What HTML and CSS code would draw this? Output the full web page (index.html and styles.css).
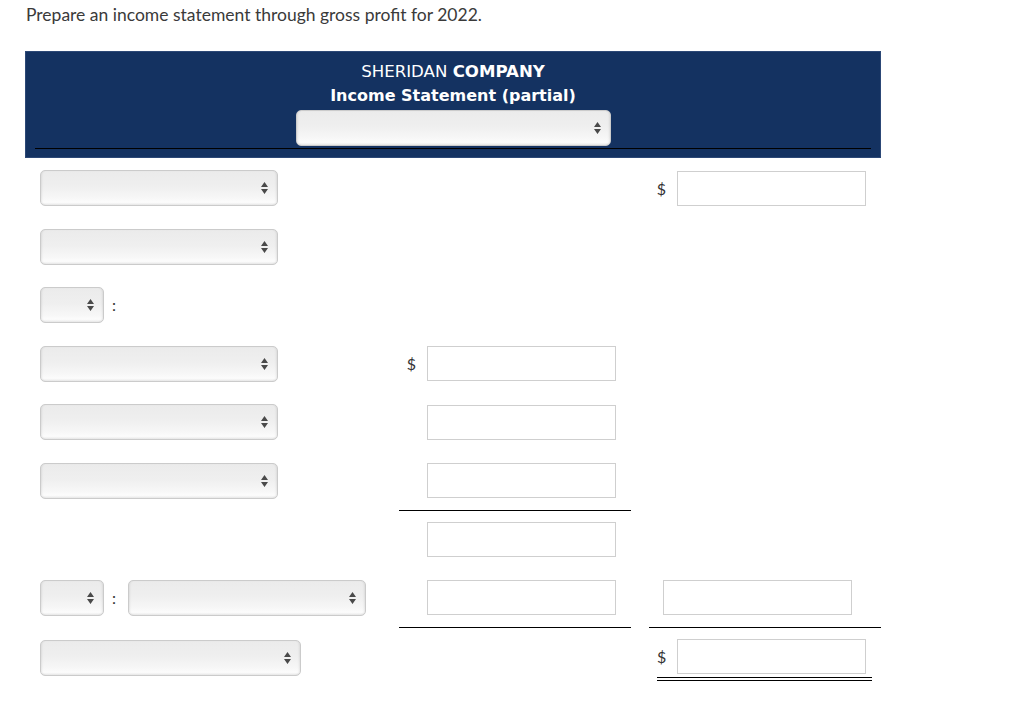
FILE: index.html
```html
<!DOCTYPE html>
<html>
<head>
<meta charset="utf-8">
<link rel="stylesheet" href="styles.css">
</head>
<body>
<div class="page">
  <p class="prompt">Prepare an income statement through gross profit for 2022.</p>
  <div class="sheet">
    <div class="sheet-head">
      <div class="head-inner">
        <div class="co">SHERIDAN <b>COMPANY</b></div>
        <div class="stmt">Income Statement (partial)</div>
        <span class="sel sel-head"><svg class="arr" width="7" height="12" viewBox="0 0 7 12"><path d="M0 5L3.5 0L7 5Z M0 7L7 7L3.5 12Z"/></svg></span>
      </div>
    </div>
    <div class="rows">
      <div class="row">
        <div class="c-label"><span class="sel sel-lg"><svg class="arr" width="7" height="12" viewBox="0 0 7 12"><path d="M0 5L3.5 0L7 5Z M0 7L7 7L3.5 12Z"/></svg></span></div>
        <div class="c-amt"></div>
        <div class="c-amt"><span class="cur">$</span><input class="inp" type="text"></div>
      </div>
      <div class="row">
        <div class="c-label"><span class="sel sel-lg"><svg class="arr" width="7" height="12" viewBox="0 0 7 12"><path d="M0 5L3.5 0L7 5Z M0 7L7 7L3.5 12Z"/></svg></span></div>
        <div class="c-amt"></div>
        <div class="c-amt"></div>
      </div>
      <div class="row">
        <div class="c-label"><span class="sel sel-sm"><svg class="arr" width="7" height="12" viewBox="0 0 7 12"><path d="M0 5L3.5 0L7 5Z M0 7L7 7L3.5 12Z"/></svg></span><span class="colon">:</span></div>
        <div class="c-amt"></div>
        <div class="c-amt"></div>
      </div>
      <div class="row">
        <div class="c-label"><span class="sel sel-lg"><svg class="arr" width="7" height="12" viewBox="0 0 7 12"><path d="M0 5L3.5 0L7 5Z M0 7L7 7L3.5 12Z"/></svg></span></div>
        <div class="c-amt"><span class="cur">$</span><input class="inp" type="text"></div>
        <div class="c-amt"></div>
      </div>
      <div class="row">
        <div class="c-label"><span class="sel sel-lg"><svg class="arr" width="7" height="12" viewBox="0 0 7 12"><path d="M0 5L3.5 0L7 5Z M0 7L7 7L3.5 12Z"/></svg></span></div>
        <div class="c-amt"><span class="cur"></span><input class="inp" type="text"></div>
        <div class="c-amt"></div>
      </div>
      <div class="row">
        <div class="c-label"><span class="sel sel-lg"><svg class="arr" width="7" height="12" viewBox="0 0 7 12"><path d="M0 5L3.5 0L7 5Z M0 7L7 7L3.5 12Z"/></svg></span></div>
        <div class="c-amt ruled"><span class="cur"></span><input class="inp" type="text"></div>
        <div class="c-amt"></div>
      </div>
      <div class="row">
        <div class="c-label"></div>
        <div class="c-amt"><span class="cur"></span><input class="inp" type="text"></div>
        <div class="c-amt"></div>
      </div>
      <div class="row">
        <div class="c-label"><span class="sel sel-sm"><svg class="arr" width="7" height="12" viewBox="0 0 7 12"><path d="M0 5L3.5 0L7 5Z M0 7L7 7L3.5 12Z"/></svg></span><span class="colon">:</span><span class="sel sel-lg"><svg class="arr" width="7" height="12" viewBox="0 0 7 12"><path d="M0 5L3.5 0L7 5Z M0 7L7 7L3.5 12Z"/></svg></span></div>
        <div class="c-amt ruled"><span class="cur"></span><input class="inp" type="text"></div>
        <div class="c-amt ruled shift"><input class="inp" type="text"></div>
      </div>
      <div class="row">
        <div class="c-label low"><span class="sel sel-xl"><svg class="arr" width="7" height="12" viewBox="0 0 7 12"><path d="M0 5L3.5 0L7 5Z M0 7L7 7L3.5 12Z"/></svg></span></div>
        <div class="c-amt"></div>
        <div class="c-amt dbl"><span class="cur cur-dbl">$</span><input class="inp" type="text"></div>
      </div>
    </div>
  </div>
</div>
</body>
</html>
```
FILE: styles.css
```css
* { box-sizing: border-box; }
body {
  margin: 0;
  background: #fff;
  color: #333;
  font-family: Lato, "Liberation Sans", sans-serif;
}
.page { padding: 5px 0 0 25px; }
.prompt {
  margin: 0;
  padding-left: 1px;
  font-size: 17.5px;
  line-height: 20px;
  color: #3a3a3a;
}
.sheet { width: 856px; margin-top: 26px; }
.sheet-head {
  background: #143261;
  border: 1px solid #2c4876;
  padding: 8px 9px;
  height: 107px;
}
.head-inner {
  display: flex;
  flex-direction: column;
  align-items: center;
  border-bottom: 1px solid #000;
  padding-bottom: 2px;
}
.co, .stmt {
  color: #fff;
  font-family: "DejaVu Sans", Verdana, sans-serif;
  font-size: 16px;
  line-height: 24px;
}
.co { font-size: 16.6px; }
.stmt { font-weight: bold; }
.sel {
  display: flex;
  align-items: center;
  justify-content: flex-end;
  height: 36px;
  padding-right: 9px;
  border: 1px solid #cbcbcb;
  border-radius: 5px;
  background: linear-gradient(#ebebeb 0%, #efefef 45%, #f7f7f7 80%, #fcfcfc 92%, #e9e9e9 100%);
  box-shadow: inset 2px 0 2px -1px rgba(0,0,0,0.08), inset -2px 0 2px -1px rgba(0,0,0,0.08);
}
.arr { fill: #4a4a4a; display: block; }
.sel-head { width: 315px; margin-top: 2px; }
.sel-lg { width: 238px; }
.sel-sm { width: 64px; }
.sel-xl { width: 261px; }
.rows { padding-top: 12px; }
.row {
  display: grid;
  grid-template-columns: 356px 232px 232px;
  column-gap: 18px;
  height: 58.5px;
  align-items: start;
}
.c-label {
  display: flex;
  align-items: center;
  padding-left: 15px;
}
.c-label.low { padding-top: 2px; }
.colon {
  width: 24px;
  padding-left: 8px;
  font-size: 16px;
  line-height: 20px;
  color: #333;
}
.c-amt {
  display: flex;
  align-items: center;
  height: 48px;
  padding-bottom: 11px;
  border-bottom: 1px solid transparent;
}
.c-amt.ruled { border-bottom-color: #000; }
.c-amt.shift { padding-left: 14px; }
.c-amt.dbl {
  height: 43px;
  margin: 0 9px 0 8px;
  padding-bottom: 3px;
  border-bottom: 4px double #000;
}
.cur {
  width: 28px;
  flex: none;
  padding-right: 11px;
  text-align: right;
  font-size: 16px;
  color: #333;
}
.cur-dbl { width: 20px; }
.inp {
  display: block;
  width: 189px;
  height: 35px;
  margin: 0;
  padding: 0 4px;
  border: 1px solid #cfcfcf;
  border-radius: 0;
  background: #fff;
  font: 14px Lato, "Liberation Sans", sans-serif;
  outline: none;
}
```
